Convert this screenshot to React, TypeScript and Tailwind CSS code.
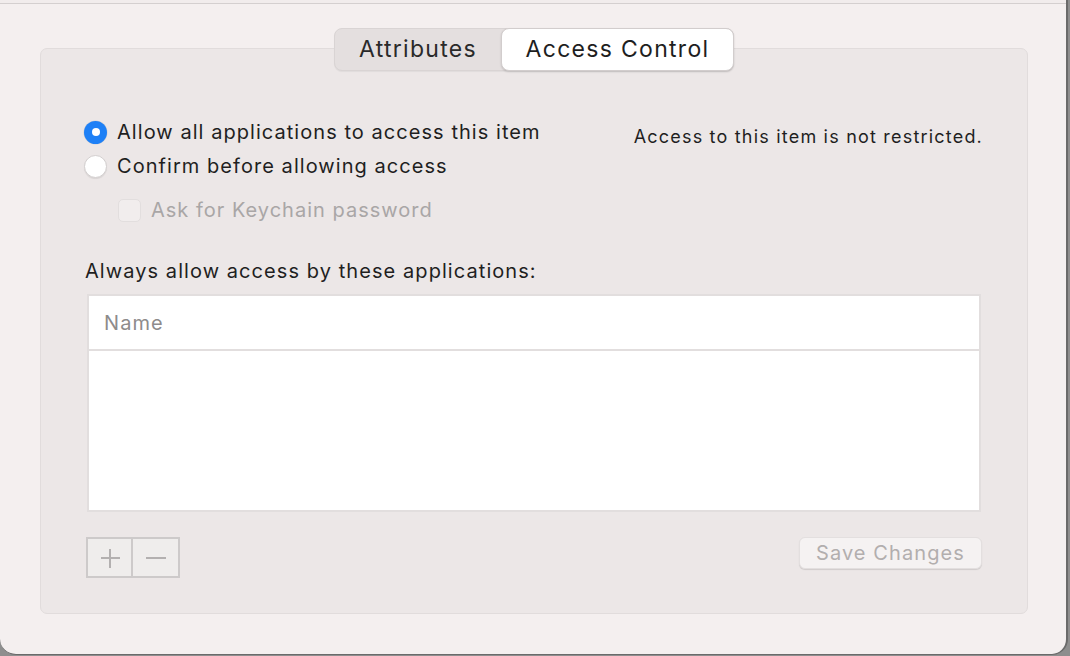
import React from "react";

const font = { fontFamily: "Inter, 'Noto Sans', 'Liberation Sans', sans-serif" };

export default function App() {
  return (
    <div className="w-[1070px] h-[656px] bg-[#8e8e8e] overflow-hidden" style={font}>
      <div className="w-[1068px] h-[655px] bg-[#f4efef] rounded-b-[16px] border-r-[2px] border-b border-[#6a6a6a] flex flex-col">
        <div className="h-[4px] border-b border-[#d4cfcf] bg-[#f1ecec]" />
        <div className="relative flex-1 pl-[40px] pr-[38px] pt-[43px] flex flex-col">
          <div className="absolute left-[334px] top-[24px] z-10 flex h-[43px] rounded-[8px] bg-[#e4dfdf] border border-[#d9d4d4] shadow-[0_1px_1px_rgba(0,0,0,0.05)]">
            <div className="w-[166px] flex items-center justify-center text-[23px] text-[#2a2a2a] tracking-[1.3px]">
              Attributes
            </div>
            <div className="w-[233px] -my-px -mr-px flex items-center justify-center bg-white rounded-[8px] border border-[#d2cdcd] shadow-[0_1px_2px_rgba(0,0,0,0.15)] text-[23px] text-[#1e1e1e] tracking-[1.3px]">
              Access Control
            </div>
          </div>
          <div className="h-[566px] mt-[1px] bg-[#ece7e7] border border-[#e1dcdc] rounded-[7px] pl-[43px] pr-[46px] pt-[66px] flex flex-col">
            <div className="flex justify-between">
              <div className="flex flex-col">
                <div className="flex items-center gap-[10px] h-[34px]">
                  <div className="w-[23px] h-[23px] rounded-full bg-[#1e80f6] flex items-center justify-center shadow-[0_0_0_0.5px_rgba(0,0,0,0.1)]">
                    <div className="w-[8px] h-[8px] rounded-full bg-white" />
                  </div>
                  <span className="text-[20px] text-[#1f1f1f] tracking-[1.05px]">Allow all applications to access this item</span>
                </div>
                <div className="flex items-center gap-[10px] h-[34px]">
                  <div className="w-[23px] h-[23px] rounded-full bg-white border border-[#d3cfcf] shadow-[0_1px_1px_rgba(0,0,0,0.08)]" />
                  <span className="text-[20px] text-[#1f1f1f] tracking-[1.05px]">Confirm before allowing access</span>
                </div>
                <div className="flex items-center gap-[10px] h-[34px] mt-[10px] pl-[34px]">
                  <div className="w-[23px] h-[23px] rounded-[5px] bg-[#f1eded] border border-[#e2dede]" />
                  <span className="text-[20px] text-[#a9a6a6] tracking-[1px]">Ask for Keychain password</span>
                </div>
              </div>
              <div className="pt-[8px] -mr-[2px] text-[18px] text-[#1f1f1f] tracking-[1.2px]">
                Access to this item is not restricted.
              </div>
            </div>
            <div className="mt-[30px] ml-[1px] text-[20px] leading-[28px] text-[#1f1f1f] tracking-[1.07px]">
              Always allow access by these applications:
            </div>
            <div className="mt-[9px] ml-[3px] h-[218px] bg-white border-[2px] border-[#e2dede] flex flex-col">
              <div className="h-[55px] border-b-[2px] border-[#e2dede] flex items-center pl-[15px] text-[20px] text-[#8e8b8b] tracking-[1.1px]">
                Name
              </div>
              <div className="flex-1" />
            </div>
            <div className="mt-[25px] flex justify-between items-start">
              <div className="flex h-[41px] ml-[2px]">
                <div className="w-[47px] h-full bg-[#efedec] border-[2px] border-[#cdcaca] flex items-center justify-center">
                  <svg width="22" height="22" viewBox="0 0 22 22">
                    <path d="M11 2v19M2 11h19" stroke="#b3b0b0" strokeWidth="2" />
                  </svg>
                </div>
                <div className="w-[47px] h-full bg-[#efedec] border-[2px] border-l-0 border-[#cdcaca] flex items-center justify-center">
                  <svg width="22" height="22" viewBox="0 0 22 22">
                    <path d="M1 11h20" stroke="#b3b0b0" strokeWidth="2" />
                  </svg>
                </div>
              </div>
              <div className="w-[183px] h-[32px] -mr-[1px] bg-[#f5f2f2] rounded-[6px] border border-[#e3dfdf] shadow-[0_1px_1px_rgba(0,0,0,0.12)] flex items-center justify-center text-[20px] text-[#b2aeae] tracking-[1.1px]">
                Save Changes
              </div>
            </div>
          </div>
        </div>
      </div>
    </div>
  );
}
